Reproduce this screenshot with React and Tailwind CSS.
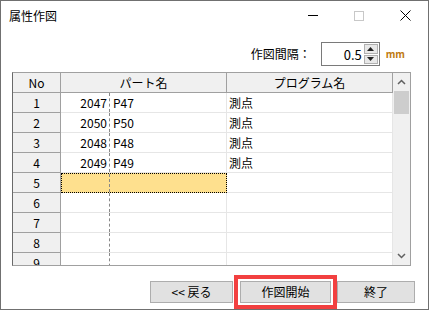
import React from "react";

const F = { fontFamily: '"Noto Sans CJK JP", "Noto Sans", sans-serif' };

const rows = [
  { no: 1, code: "2047", name: "P47", prog: "測点" },
  { no: 2, code: "2050", name: "P50", prog: "測点" },
  { no: 3, code: "2048", name: "P48", prog: "測点" },
  { no: 4, code: "2049", name: "P49", prog: "測点" },
  { no: 5, sel: true },
  { no: 6 },
  { no: 7 },
  { no: 8 },
  { no: 9 },
];

export default function App() {
  return (
    <div className="w-[431px] h-[312px] bg-white text-[12px] text-black" style={F}>
      <div className="w-[429px] h-[310px] border border-[#707070] flex flex-col">
        {/* title bar */}
        <div className="h-[29px] flex items-center shrink-0">
          <div className="pl-[8px] flex-1 leading-none">属性作図</div>
          <div className="w-[46px] h-full flex items-center justify-center">
            <div className="w-[10px] h-px bg-black" />
          </div>
          <div className="w-[46px] h-full flex items-center justify-center">
            <div className="w-[10px] h-[10px] border border-[#c8c8c8]" />
          </div>
          <div className="w-[46px] h-full flex items-center justify-center">
            <svg width="11" height="11" viewBox="0 0 11 11">
              <path d="M0.5 0.5L10.5 10.5M10.5 0.5L0.5 10.5" stroke="#000" strokeWidth="1" />
            </svg>
          </div>
        </div>
        {/* interval row */}
        <div className="h-[24px] mt-[12px] flex items-center justify-end pr-[23px]">
          <span className="mr-[10px] leading-none">作図間隔：</span>
          <div className="w-[59px] h-[24px] border border-[#7a7a7a] flex">
            <div className="flex-1 flex items-center justify-end pr-[2px] text-[13px] leading-none">0.5</div>
            <div className="w-[15px] flex flex-col gap-px py-px pr-px">
              <div className="flex-1 bg-[#e8e8e8] border border-[#b0b0b0] flex items-center justify-center">
                <svg width="7" height="4" viewBox="0 0 7 4"><path d="M3.5 0L7 4H0z" fill="#222" /></svg>
              </div>
              <div className="flex-1 bg-[#e8e8e8] border border-[#b0b0b0] flex items-center justify-center">
                <svg width="7" height="4" viewBox="0 0 7 4"><path d="M0 0H7L3.5 4z" fill="#222" /></svg>
              </div>
            </div>
          </div>
          <span className="ml-[6px] text-[10px] font-bold text-[#c07a10] leading-none">mm</span>
        </div>
        {/* grid */}
        <div className="ml-[11px] mt-[6px] w-[399px] h-[196px] border border-[#a0a0a0] border-l-[#696969] flex overflow-hidden">
          <div className="w-[380px] flex flex-col">
            <div className="h-[20px] shrink-0 flex bg-[#f0f0f0] border-b border-[#a0a0a0]">
              <div className="w-[48px] border-r border-[#a0a0a0] flex items-center justify-center">No</div>
              <div className="w-[166px] border-r border-[#a0a0a0] flex items-center justify-center">パート名</div>
              <div className="w-[166px] border-r border-[#a0a0a0] flex items-center justify-center">プログラム名</div>
            </div>
            {rows.map((r) => (
              <div key={r.no} className="h-[20px] shrink-0 flex">
                <div className="w-[48px] bg-[#f0f0f0] border-r border-b border-[#a0a0a0] flex items-center justify-center">
                  {r.no}
                </div>
                <div
                  className={
                    r.sel
                      ? "w-[166px] bg-[#fee08e] border border-dotted border-black flex"
                      : "w-[166px] border-r border-b border-[#e6e6e6] flex"
                  }
                >
                  <div className={r.sel ? "w-[48px] flex items-center justify-end pr-[2px] border-r border-dashed border-[#888]" : "w-[49px] flex items-center justify-end pr-[2px] border-r border-dashed border-[#888]"}>
                    {r.code}
                  </div>
                  <div className="flex-1 flex items-center pl-[3px]">{r.name}</div>
                </div>
                <div className="w-[166px] border-r border-b border-[#e6e6e6] flex items-center pl-[2px]">{r.prog}</div>
              </div>
            ))}
          </div>
          <div className="w-[17px] bg-[#f0f0f0] flex flex-col">
            <div className="h-[18px] flex items-center justify-center">
              <svg width="9" height="6" viewBox="0 0 9 6"><path d="M1 5L4.5 1.5L8 5" stroke="#606060" strokeWidth="1.5" fill="none" /></svg>
            </div>
            <div className="mx-px h-[23px] bg-[#cdcdcd]" />
            <div className="flex-1" />
            <div className="h-[18px] flex items-center justify-center">
              <svg width="9" height="6" viewBox="0 0 9 6"><path d="M1 1L4.5 4.5L8 1" stroke="#606060" strokeWidth="1.5" fill="none" /></svg>
            </div>
          </div>
        </div>
        {/* buttons */}
        <div className="mt-[9px] flex items-center pl-[149px]">
          <div className="w-[83px] h-[22px] bg-[#e1e1e1] border border-[#adadad] flex items-center justify-center">&lt;&lt; 戻る</div>
          <div className="ml-[1px] border-[4px] border-[#f24040] p-[2px]">
            <div className="w-[91px] h-[22px] bg-[#e1e1e1] border border-[#adadad] flex items-center justify-center">作図開始</div>
          </div>
          <div className="w-[78px] h-[22px] bg-[#e1e1e1] border border-[#adadad] flex items-center justify-center">終了</div>
        </div>
      </div>
    </div>
  );
}
